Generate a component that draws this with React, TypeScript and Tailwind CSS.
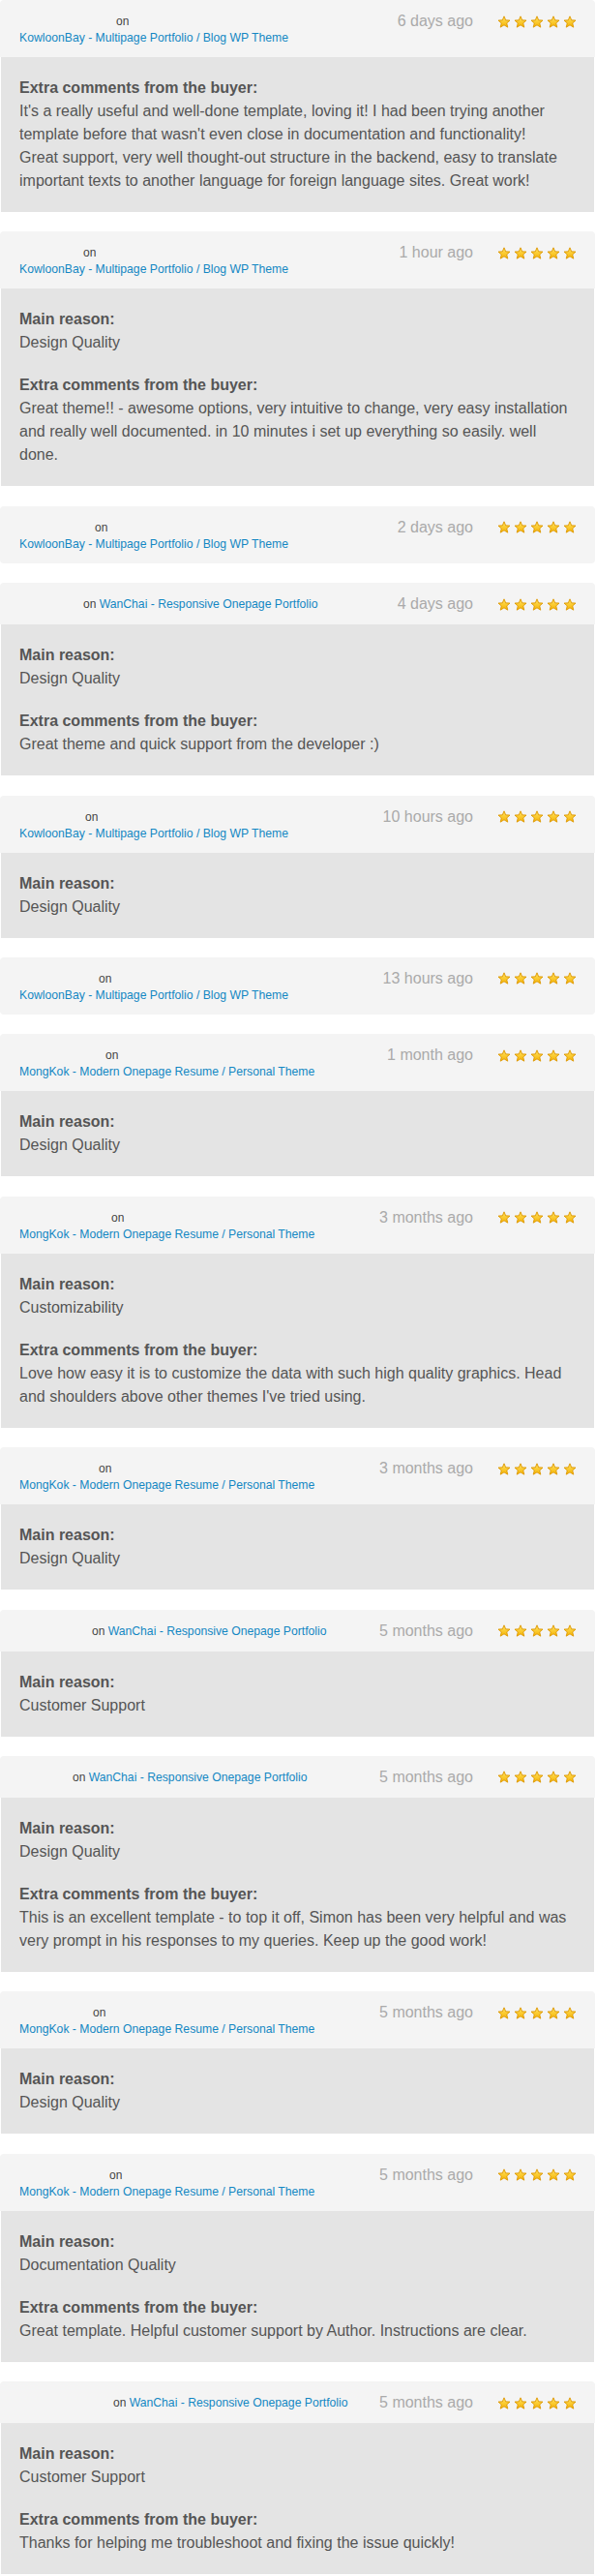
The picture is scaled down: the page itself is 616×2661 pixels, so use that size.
import React from "react";

type Review = {
  onOffset: string;
  inline?: boolean;
  item: "kowloon" | "mongkok" | "wanchai";
  time: string;
  reason?: string;
  comment?: string[];
};

const ITEMS = {
  kowloon: "KowloonBay - Multipage Portfolio / Blog WP Theme",
  mongkok: "MongKok - Modern Onepage Resume / Personal Theme",
  wanchai: "WanChai - Responsive Onepage Portfolio"
};

const reviews: Review[] = [
  {
    onOffset: "pl-[100px]",
    item: "kowloon",
    time: "6 days ago",
    comment: [
      "It's a really useful and well-done template, loving it! I had been trying another",
      "template before that wasn't even close in documentation and functionality!",
      "Great support, very well thought-out structure in the backend, easy to translate",
      "important texts to another language for foreign language sites. Great work!"
    ]
  },
  {
    onOffset: "pl-[66px]",
    item: "kowloon",
    time: "1 hour ago",
    reason: "Design Quality",
    comment: [
      "Great theme!! - awesome options, very intuitive to change, very easy installation",
      "and really well documented. in 10 minutes i set up everything so easily. well",
      "done."
    ]
  },
  { onOffset: "pl-[78px]", item: "kowloon", time: "2 days ago" },
  {
    onOffset: "pl-[66px]",
    inline: true,
    item: "wanchai",
    time: "4 days ago",
    reason: "Design Quality",
    comment: ["Great theme and quick support from the developer :)"]
  },
  { onOffset: "pl-[68px]", item: "kowloon", time: "10 hours ago", reason: "Design Quality" },
  { onOffset: "pl-[82px]", item: "kowloon", time: "13 hours ago" },
  { onOffset: "pl-[89px]", item: "mongkok", time: "1 month ago", reason: "Design Quality" },
  {
    onOffset: "pl-[95px]",
    item: "mongkok",
    time: "3 months ago",
    reason: "Customizability",
    comment: [
      "Love how easy it is to customize the data with such high quality graphics. Head",
      "and shoulders above other themes I've tried using."
    ]
  },
  { onOffset: "pl-[82px]", item: "mongkok", time: "3 months ago", reason: "Design Quality" },
  { onOffset: "pl-[75px]", inline: true, item: "wanchai", time: "5 months ago", reason: "Customer Support" },
  {
    onOffset: "pl-[55px]",
    inline: true,
    item: "wanchai",
    time: "5 months ago",
    reason: "Design Quality",
    comment: [
      "This is an excellent template - to top it off, Simon has been very helpful and was",
      "very prompt in his responses to my queries. Keep up the good work!"
    ]
  },
  { onOffset: "pl-[76px]", item: "mongkok", time: "5 months ago", reason: "Design Quality" },
  {
    onOffset: "pl-[93px]",
    item: "mongkok",
    time: "5 months ago",
    reason: "Documentation Quality",
    comment: ["Great template. Helpful customer support by Author. Instructions are clear."]
  },
  {
    onOffset: "pl-[97px]",
    inline: true,
    item: "wanchai",
    time: "5 months ago",
    reason: "Customer Support",
    comment: ["Thanks for helping me troubleshoot and fixing the issue quickly!"]
  }
];

const Star = ({ id }: { id: string }) => (
  <svg width="14" height="13" viewBox="0 0 24 23" className="block">
    <defs>
      <linearGradient id={id} x1="0" y1="0" x2="0" y2="1">
        <stop offset="0%" stopColor="#ffe466" />
        <stop offset="100%" stopColor="#f6b300" />
      </linearGradient>
    </defs>
    <polygon
      points="12,1.5 15,8.6 22.6,9 16.8,14 18.7,21.5 12,17.4 5.3,21.5 7.2,14 1.4,9 9,8.6"
      fill={`url(#${id})`}
      stroke="#dd9700"
      strokeWidth="1.6"
      strokeLinejoin="round"
    />
  </svg>
);

const Stars = ({ idx }: { idx: number }) => (
  <div className="flex gap-[3px]">
    {[0, 1, 2, 3, 4].map((i) => (
      <Star key={i} id={`star-${idx}-${i}`} />
    ))}
  </div>
);

const ReviewCard = ({ data, idx }: { data: Review; idx: number }) => {
  const hasBody = !!data.reason || !!data.comment;
  const link = <a className="text-[12.2px] text-[#1387c3]">{ITEMS[data.item]}</a>;

  return (
    <div className="mr-px">
      <div
        className={
          "flex items-start justify-between bg-[#f4f4f4] pl-5 pr-[19px] min-h-[43px] " +
          (hasBody ? "rounded-t-[4px]" : "rounded-[4px]")
        }
      >
        <div className="pt-[14px] pb-[11px] text-[12px] leading-[17px] text-[#444]">
          {data.inline ? (
            <div className={data.onOffset}>
              on {link}
            </div>
          ) : (
            <>
              <div className={data.onOffset}>on</div>
              <div>{link}</div>
            </>
          )}
        </div>
        <div className="flex items-center h-6 mt-[10px]">
          <span className="text-[16px] text-[#aaaaaa]">{data.time}</span>
          <div className="ml-[25px]">
            <Stars idx={idx} />
          </div>
        </div>
      </div>
      {hasBody && (
        <div className="mx-px bg-[#e4e4e4] px-[19px] py-5 text-[16px] leading-6 text-[#555]">
          {data.reason && (
            <div>
              <div className="font-bold">Main reason:</div>
              <div>{data.reason}</div>
            </div>
          )}
          {data.comment && (
            <div className={data.reason ? "mt-5" : ""}>
              <div className="font-bold">Extra comments from the buyer:</div>
              {data.comment.map((line, i) => (
                <div key={i} className="whitespace-nowrap">
                  {line}
                </div>
              ))}
            </div>
          )}
        </div>
      )}
    </div>
  );
};

export default function App() {
  return (
    <div
      className="w-[616px] bg-white flex flex-col gap-[20.4px]"
      style={{ fontFamily: '"Liberation Sans", Arial, Helvetica, sans-serif' }}
    >
      {reviews.map((r, i) => (
        <ReviewCard key={i} data={r} idx={i} />
      ))}
    </div>
  );
}
